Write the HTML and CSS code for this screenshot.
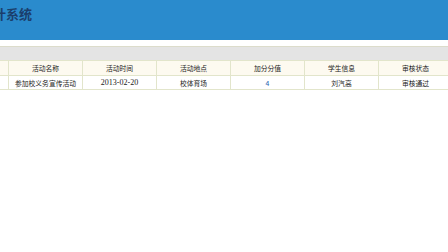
FILE: index.html
```html
<!DOCTYPE html>
<html lang="zh-CN">
<head>
    <meta charset="UTF-8">
    <title>统计系统</title>
    <link rel="stylesheet" href="styles.css">
</head>
<body>
    <div class="header">
        <h1 class="title">统计系统</h1>
    </div>
    <div class="toolbar"></div>
    <table class="list">
        <tr>
            <th class="cut"></th>
            <th>活动名称</th>
            <th>活动时间</th>
            <th>活动地点</th>
            <th>加分分值</th>
            <th>学生信息</th>
            <th>审核状态</th>
        </tr>
        <tr>
            <td class="cut"></td>
            <td>参加校义务宣传活动</td>
            <td class="date">2013-02-20</td>
            <td>校体育场</td>
            <td class="score">4</td>
            <td>刘汽高</td>
            <td>审核通过</td>
        </tr>
    </table>
</body>
</html>
```

FILE: styles.css
```css
html, body {
    margin: 0;
    padding: 0;
    overflow: hidden;
    background-color: #fff;
    font-family: "Noto Sans CJK SC", "DejaVu Sans", sans-serif;
    color: #222;
}
.header {
    height: 40px;
    background-color: #2a8bcd;
    overflow: hidden;
}
.title {
    margin: 0;
    padding-top: 5px;
    font-size: 13px;
    line-height: 18px;
    font-weight: bold;
    color: #1b3f6c;
    text-indent: -20px;
    white-space: nowrap;
}
.toolbar {
    margin-top: 6px;
    height: 13px;
    background-color: #e4e4e4;
    border-top: 1px solid #dcdccb;
}
.list {
    border-collapse: collapse;
    table-layout: fixed;
    width: 453px;
    font-size: 6.8px;
}
.list th, .list td {
    width: 73px;
    border: 1px solid #e2e5cb;
    text-align: center;
    padding: 0;
    white-space: nowrap;
    overflow: hidden;
}
.list th {
    height: 14px;
    font-weight: normal;
    background-color: #fdfaf0;
}
.list td {
    height: 13px;
}
.list .cut {
    width: 8px;
    border-left: none;
}
.date {
    font-family: "Liberation Serif", serif;
    font-size: 8px;
}
.score {
    color: #2a5fb0;
}
```
